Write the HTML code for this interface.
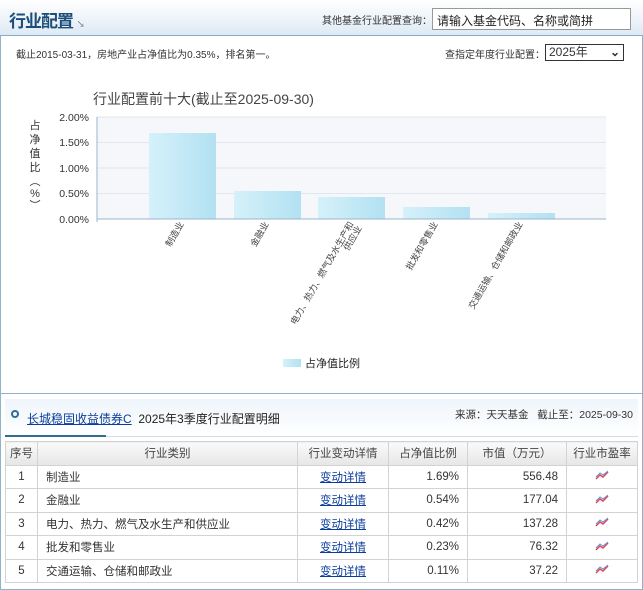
<!DOCTYPE html>
<html><head><meta charset="utf-8"><style>
*{margin:0;padding:0;box-sizing:border-box}
body{width:643px;height:590px;background:#fff;font-family:"Liberation Sans","Noto Sans CJK SC",sans-serif;font-size:12px;color:#333;position:relative;overflow:hidden}
.abs{position:absolute}
.hdr{left:0;top:0;width:643px;height:36px;background:linear-gradient(#fff,#dde9f4)}
.box{left:0;top:35px;width:643px;height:555px;border:1px solid #8db4ca;border-top:1px solid #7fb0c8}
table{border-collapse:collapse;position:absolute;left:5px;top:441px;width:633px;font-size:11.5px}
td,th{border:1px solid #d3d3d3;height:23.5px;font-weight:normal}
th{background:linear-gradient(#fafafa,#e6e6e6);color:#444}
td a{color:#0a3c9c;text-decoration:underline}
.r{text-align:right;padding-right:8px}
</style></head><body>
<div class="abs hdr"></div>
<div class="abs" style="left:9px;top:7px;font-size:17px;font-weight:bold;color:#1d4e7a;letter-spacing:-1px">行业配置 <span style="font-size:8px;color:#666;font-weight:normal">↘</span></div>
<div class="abs" style="left:322px;top:12px;font-size:10px;color:#333">其他基金行业配置查询：</div>
<div class="abs" style="left:432px;top:8px;width:199px;height:22px;border:1px solid #999;background:#fff;font-size:12px;padding:3px 4px;color:#222">请输入基金代码、名称或简拼</div>
<div class="abs box"></div>
<div class="abs" style="left:16px;top:46px;font-size:10px">截止2015-03-31，房地产业占净值比为0.35%，排名第一。</div>
<div class="abs" style="left:445px;top:46px;font-size:10px">查指定年度行业配置：</div>
<div class="abs" style="left:545px;top:44px;width:79px;height:17px;border:1px solid #333;font-size:12px;padding:0 3px;line-height:15px">2025年<span style="float:right;font-weight:bold">⌄</span></div>
<svg class="abs" style="left:0;top:70px" width="643" height="325">
<text x="93" y="34" font-size="14" fill="#444" font-family="Liberation Sans,Noto Sans CJK SC,sans-serif">行业配置前十大(截止至2025-09-30)</text>
<rect x="97" y="47" width="509" height="102" fill="#f6f7fa"/>
<g stroke="#e2e6ee"><line x1="97" y1="47" x2="606" y2="47"/><line x1="97" y1="72.5" x2="606" y2="72.5"/><line x1="97" y1="98" x2="606" y2="98"/><line x1="97" y1="123.5" x2="606" y2="123.5"/></g>
<defs><linearGradient id="g"><stop offset="0" stop-color="#d5f1fa"/><stop offset="1" stop-color="#b2e1f2"/></linearGradient></defs>
<rect x="149" y="63" width="67" height="86" fill="url(#g)"/>
<rect x="234" y="121" width="67" height="28" fill="url(#g)"/>
<rect x="318" y="127" width="67" height="22" fill="url(#g)"/>
<rect x="403" y="137" width="67" height="12" fill="url(#g)"/>
<rect x="488" y="143" width="67" height="6" fill="url(#g)"/>
<line x1="97" y1="149" x2="606" y2="149" stroke="#9ab6cc"/><line x1="97" y1="47" x2="97" y2="152" stroke="#9ab6cc"/>
<g font-size="10.5" fill="#333" text-anchor="end"><text x="89" y="51">2.00%</text><text x="89" y="76">1.50%</text><text x="89" y="102">1.00%</text><text x="89" y="127">0.50%</text><text x="89" y="153">0.00%</text></g>
<g font-size="11" fill="#333" text-anchor="middle"><text x="35" y="59">占</text><text x="35" y="73">净</text><text x="35" y="87">值</text><text x="35" y="101">比</text><text x="35" y="115">︵</text><text x="35" y="127">%</text><text x="35" y="139">︶</text></g>
<g font-size="9" fill="#444" text-anchor="end">
<text transform="translate(184,154) rotate(-60)">制造业</text>
<text transform="translate(269,154) rotate(-60)">金融业</text>
<text transform="translate(354,154) rotate(-60)">电力、热力、燃气及水生产和</text>
<text transform="translate(362,158) rotate(-60)">供应业</text>
<text transform="translate(438,154) rotate(-60)">批发和零售业</text>
<text transform="translate(523,154) rotate(-60)">交通运输、仓储和邮政业</text>
</g>
<rect x="283" y="289" width="18" height="8" fill="url(#g)"/>
<text x="305" y="297" font-size="11" fill="#222">占净值比例</text>
</svg>
<div class="abs" style="left:0;top:393px;width:643px;border-top:1px solid #8db4ca"></div>
<div class="abs" style="left:5px;top:399px;width:633px;height:38px;background:linear-gradient(#eef5fb,#fff);border-bottom:1px solid #cfdde8"></div>
<div class="abs" style="left:5px;top:435px;width:101px;height:2px;background:#2f6f95"></div>
<div class="abs" style="left:11px;top:410px;width:8px;height:8px;border:2px solid #2f6f95;border-radius:50%"></div>
<div class="abs" style="left:27px;top:410px;font-size:12px;color:#222"><a style="color:#0a3c9c;text-decoration:underline">长城稳固收益债券C</a>&nbsp; 2025年3季度行业配置明细</div>
<div class="abs" style="left:455px;top:407px;font-size:10.5px">来源：天天基金&nbsp;&nbsp;&nbsp;截止至：2025-09-30</div>
<table>
<tr><th style="width:32px">序号</th><th style="width:260px">行业类别</th><th style="width:91px">行业变动详情</th><th style="width:79px">占净值比例</th><th style="width:99px">市值（万元）</th><th>行业市盈率</th></tr>
<tr><td align="center">1</td><td style="padding-left:8px">制造业</td><td align="center"><a>变动详情</a></td><td class="r">1.69%</td><td class="r">556.48</td><td align="center"><svg width="14" height="10"><path d="M1 9L5 5L8 7L13 2" stroke="#e04a5a" stroke-width="1.5" fill="none"/><path d="M1 7L5 3L8 5L13 1" stroke="#6a8fd0" stroke-width="1" fill="none"/></svg></td></tr>
<tr><td align="center">2</td><td style="padding-left:8px">金融业</td><td align="center"><a>变动详情</a></td><td class="r">0.54%</td><td class="r">177.04</td><td align="center"><svg width="14" height="10"><path d="M1 9L5 5L8 7L13 2" stroke="#e04a5a" stroke-width="1.5" fill="none"/><path d="M1 7L5 3L8 5L13 1" stroke="#6a8fd0" stroke-width="1" fill="none"/></svg></td></tr>
<tr><td align="center">3</td><td style="padding-left:8px">电力、热力、燃气及水生产和供应业</td><td align="center"><a>变动详情</a></td><td class="r">0.42%</td><td class="r">137.28</td><td align="center"><svg width="14" height="10"><path d="M1 9L5 5L8 7L13 2" stroke="#e04a5a" stroke-width="1.5" fill="none"/><path d="M1 7L5 3L8 5L13 1" stroke="#6a8fd0" stroke-width="1" fill="none"/></svg></td></tr>
<tr><td align="center">4</td><td style="padding-left:8px">批发和零售业</td><td align="center"><a>变动详情</a></td><td class="r">0.23%</td><td class="r">76.32</td><td align="center"><svg width="14" height="10"><path d="M1 9L5 5L8 7L13 2" stroke="#e04a5a" stroke-width="1.5" fill="none"/><path d="M1 7L5 3L8 5L13 1" stroke="#6a8fd0" stroke-width="1" fill="none"/></svg></td></tr>
<tr><td align="center">5</td><td style="padding-left:8px">交通运输、仓储和邮政业</td><td align="center"><a>变动详情</a></td><td class="r">0.11%</td><td class="r">37.22</td><td align="center"><svg width="14" height="10"><path d="M1 9L5 5L8 7L13 2" stroke="#e04a5a" stroke-width="1.5" fill="none"/><path d="M1 7L5 3L8 5L13 1" stroke="#6a8fd0" stroke-width="1" fill="none"/></svg></td></tr>
</table>
</body></html>
